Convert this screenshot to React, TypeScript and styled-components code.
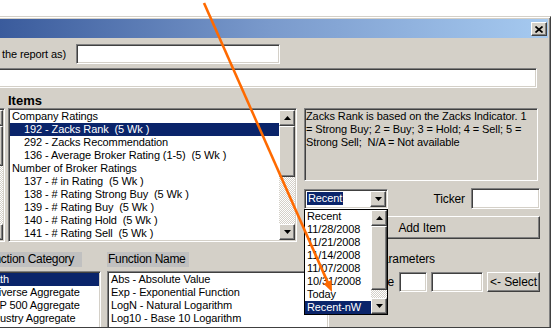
import React from 'react';
import styled, { createGlobalStyle, css } from 'styled-components';

const FACE = '#d4d0c8';
const SHADOW = '#808080';
const DARK = '#404040';
const NAVY = '#0a246a';
const CHECKER = `repeating-conic-gradient(#ffffff 0% 25%, ${FACE} 0% 50%) 0 0 / 2px 2px`;

const GlobalStyle = createGlobalStyle`
  html, body { margin: 0; padding: 0; background: #ffffff; }
  body {
    font-family: "Liberation Sans", Arial, sans-serif;
    font-size: 11px;
    letter-spacing: -0.1px;
    color: #000000;
  }
  * { box-sizing: border-box; }
`;

const sunken = css`
  border: 1px solid;
  border-color: ${SHADOW} #ffffff #ffffff ${SHADOW};
  padding: 1px;
  box-shadow: inset 1px 1px ${DARK}, inset -1px -1px ${FACE};
`;

const raised = css`
  border: 1px solid;
  border-color: #ffffff ${DARK} ${DARK} #ffffff;
  box-shadow: inset -1px -1px ${SHADOW};
  background: ${FACE};
`;

const Page = styled.div`
  position: relative;
  width: 551px;
  height: 328px;
  overflow: hidden;
  padding-top: 16px;
`;

const Window = styled.div`
  width: 651px;
  height: 312px;
  margin-left: -100px;
  overflow: hidden;
  background: ${FACE};
  border-top: 1px solid ${FACE};
  border-right: 1px solid ${DARK};
  border-bottom: 1px solid ${DARK};
  box-shadow: inset 0 1px #ffffff, inset -1px 0 ${SHADOW};
  padding: 2px 2px 0 0;
`;

const TitleBar = styled.div`
  height: 19px;
  display: flex;
  align-items: flex-start;
  justify-content: flex-end;
  padding: 3px 1px 0 0;
  background: linear-gradient(90deg, #1a3a80 0%, #3a5b9c 15.4%, #7a9acc 57%, #a6caf0 100%);
`;

const CloseButton = styled.div`
  ${raised}
  width: 16px;
  height: 14px;
  display: flex;
  align-items: center;
  justify-content: center;
`;

const Body = styled.div`
  padding-top: 6px;
`;

const FieldRow = styled.div`
  display: flex;
  align-items: center;
  gap: 10px;
  height: 20px;
`;

const FieldLabel = styled.div`
  width: 166px;
  text-align: right;
  white-space: nowrap;
`;

const TextBox = styled.div<{ $w: number; $h?: number }>`
  ${sunken}
  width: ${(p) => p.$w}px;
  height: ${(p) => p.$h ?? 20}px;
  background: #ffffff;
  flex: none;
`;

const WideRow = styled.div`
  margin-top: 4px;
`;

const TopSection = styled.div`
  display: flex;
  align-items: flex-start;
  margin-top: 4px;
`;

const Pane = styled.div<{ $w: number; $ml?: number }>`
  width: ${(p) => p.$w}px;
  margin-left: ${(p) => p.$ml ?? 0}px;
  flex: none;
  display: flex;
  flex-direction: column;
`;

const SectionLabel = styled.div`
  height: 16px;
  line-height: 17px;
  font-size: 13px;
  font-weight: bold;
  letter-spacing: 0;
`;

const ListBox = styled.div<{ $h: number }>`
  ${sunken}
  height: ${(p) => p.$h}px;
  background: #ffffff;
  display: flex;
  overflow: hidden;
`;

const ListRows = styled.div`
  flex: 1;
  min-width: 0;
  display: flex;
  flex-direction: column;
`;

const Row = styled.div<{ $indent: number; $selected?: boolean }>`
  height: 13px;
  line-height: 13px;
  flex: none;
  white-space: pre;
  padding-left: ${(p) => p.$indent}px;
  background: ${(p) => (p.$selected ? NAVY : 'transparent')};
  color: ${(p) => (p.$selected ? '#ffffff' : '#000000')};
`;

const SBar = styled.div`
  width: 16px;
  flex: none;
  display: flex;
  flex-direction: column;
  background: ${CHECKER};
`;

const SBtn = styled.div`
  ${raised}
  height: 16px;
  flex: none;
  display: flex;
  align-items: center;
  justify-content: center;
`;

const Thumb = styled.div<{ $top: number; $h: number }>`
  ${raised}
  margin-top: ${(p) => p.$top}px;
  height: ${(p) => p.$h}px;
  flex: none;
`;

const Spacer = styled.div`
  flex: 1;
`;

const RightPane = styled.div`
  width: 236px;
  margin-left: 7px;
  padding-top: 16px;
  flex: none;
  display: flex;
  flex-direction: column;
`;

const Description = styled.div`
  ${sunken}
  width: 234px;
  height: 73px;
  background: ${FACE};
  line-height: 13px;
  white-space: pre;
  padding-left: 1px;
`;

const ComboRow = styled.div`
  margin-top: 7px;
  display: flex;
  align-items: center;
  height: 21px;
`;

const ComboWrap = styled.div`
  position: relative;
  flex: none;
`;

const Combo = styled.div`
  ${sunken}
  width: 84px;
  height: 20px;
  background: #ffffff;
  display: flex;
  align-items: center;
  justify-content: space-between;
`;

const ComboText = styled.span`
  margin-left: 1px;
  height: 13px;
  line-height: 13px;
  padding: 0 1px;
  background: ${NAVY};
  color: #ffffff;
`;

const ComboButton = styled(SBtn)`
  width: 16px;
  height: 16px;
`;

const Popup = styled.div`
  position: absolute;
  left: 0;
  top: 20px;
  width: 84px;
  height: 106px;
  border: 1px solid #000000;
  background: #ffffff;
  display: flex;
  z-index: 5;
`;

const TickerLabel = styled.div`
  margin-left: auto;
  margin-right: 6px;
  font-size: 12px;
`;

const Button = styled.div<{ $w: number; $h: number }>`
  ${raised}
  width: ${(p) => p.$w}px;
  height: ${(p) => p.$h}px;
  display: flex;
  align-items: center;
  justify-content: center;
  flex: none;
  font-size: 12px;
`;

const AddItemRow = styled.div`
  margin-top: 7px;
`;

const BottomSection = styled.div`
  display: flex;
  align-items: flex-start;
  margin-top: 10px;
`;

const Caption = styled.div<{ $w: number }>`
  width: ${(p) => p.$w}px;
  height: 15px;
  line-height: 15px;
  background: #c0c0c0;
  padding-left: 1px;
  white-space: nowrap;
  font-size: 12px;
  letter-spacing: -0.3px;
`;

const ListGap = styled.div`
  height: 4px;
`;

const ParamsPane = styled.div`
  width: 211px;
  flex: none;
  display: flex;
  flex-direction: column;
`;

const ParamsLabel = styled.div`
  height: 15px;
  line-height: 15px;
  padding-left: 45px;
  font-size: 12px;
`;

const ParamRow = styled.div`
  margin-top: 5px;
  display: flex;
  align-items: center;
  justify-content: flex-end;
  gap: 4px;
`;

const ParamLabel = styled.div`
  margin-right: 1px;
  font-size: 12px;
`;

const Overlay = styled.svg`
  position: absolute;
  left: 0;
  top: 0;
  pointer-events: none;
  z-index: 10;
`;

const Arrow = ({ up }: { up?: boolean }) => (
  <svg width="7" height="4" viewBox="0 0 7 4">
    <path d={up ? 'M3.5 0 L7 4 L0 4 Z' : 'M0 0 L7 0 L3.5 4 Z'} fill="#000" />
  </svg>
);

const Scrollbar = ({ top, h }: { top: number; h: number }) => (
  <SBar>
    <SBtn>
      <Arrow up />
    </SBtn>
    <Thumb $top={top} $h={h} />
    <Spacer />
    <SBtn>
      <Arrow />
    </SBtn>
  </SBar>
);

type Item = { text: string; indent: number; selected?: boolean };

const items: Item[] = [
  { text: 'Company Ratings', indent: 2 },
  { text: '192 - Zacks Rank  (5 Wk )', indent: 14, selected: true },
  { text: '292 - Zacks Recommendation', indent: 14 },
  { text: '136 - Average Broker Rating (1-5)  (5 Wk )', indent: 14 },
  { text: 'Number of Broker Ratings', indent: 2 },
  { text: '137 - # in Rating  (5 Wk )', indent: 14 },
  { text: '138 - # Rating Strong Buy  (5 Wk )', indent: 14 },
  { text: '139 - # Rating Buy  (5 Wk )', indent: 14 },
  { text: '140 - # Rating Hold  (5 Wk )', indent: 14 },
  { text: '141 - # Rating Sell  (5 Wk )', indent: 14 },
];

const dates = ['Recent', '11/28/2008', '11/21/2008', '11/14/2008', '11/07/2008', '10/31/2008', 'Today', 'Recent-nW'];

const categories = ['Math', 'Universe Aggregate', 'S&P 500 Aggregate', 'Industry Aggregate'];
const functions = [
  'Abs - Absolute Value',
  'Exp - Exponential Function',
  'LogN - Natural Logarithm',
  'Log10 - Base 10 Logarithm',
];

const description =
  'Zacks Rank is based on the Zacks Indicator. 1\n= Strong Buy; 2 = Buy; 3 = Hold; 4 = Sell; 5 =\nStrong Sell;  N/A = Not available';

export default function App() {
  const sx = 204, sy = 3, tx = 332, ty = 292;
  const dx = tx - sx, dy = ty - sy;
  const len = Math.hypot(dx, dy);
  const ux = dx / len, uy = dy / len;
  const px = -uy, py = ux;
  const bx = tx - ux * 11, by = ty - uy * 11;
  const head = `${tx},${ty} ${bx + px * 4.5},${by + py * 4.5} ${bx - px * 4.5},${by - py * 4.5}`;

  return (
    <>
      <GlobalStyle />
      <Page>
        <Window>
          <TitleBar>
            <CloseButton>
              <svg width="8" height="7" viewBox="0 0 8 7">
                <path d="M0.5 0.5 L7.5 6.5 M7.5 0.5 L0.5 6.5" stroke="#000" strokeWidth="1.7" />
              </svg>
            </CloseButton>
          </TitleBar>
          <Body>
            <FieldRow>
              <FieldLabel>Name (Save the report as)</FieldLabel>
              <TextBox $w={204} />
            </FieldRow>
            <WideRow>
              <TextBox $w={637} />
            </WideRow>
            <TopSection>
              <Pane $w={105}>
                <SectionLabel />
                <ListBox $h={134}>
                  <ListRows />
                  <Scrollbar top={0} h={40} />
                </ListBox>
              </Pane>
              <Pane $w={289} $ml={3}>
                <SectionLabel>Items</SectionLabel>
                <ListBox $h={134}>
                  <ListRows>
                    {items.map((it) => (
                      <Row key={it.text} $indent={it.indent} $selected={it.selected}>
                        {it.text}
                      </Row>
                    ))}
                  </ListRows>
                  <Scrollbar top={0} h={51} />
                </ListBox>
              </Pane>
              <RightPane>
                <Description>{description}</Description>
                <ComboRow>
                  <ComboWrap>
                    <Combo>
                      <ComboText>Recent</ComboText>
                      <ComboButton>
                        <Arrow />
                      </ComboButton>
                    </Combo>
                    <Popup>
                      <ListRows>
                        {dates.map((d) => (
                          <Row key={d} $indent={2} $selected={d === 'Recent-nW'}>
                            {d}
                          </Row>
                        ))}
                      </ListRows>
                      <Scrollbar top={0} h={64} />
                    </Popup>
                  </ComboWrap>
                  <TickerLabel>Ticker</TickerLabel>
                  <TextBox $w={69} $h={21} />
                </ComboRow>
                <AddItemRow>
                  <Button $w={236} $h={23}>Add Item</Button>
                </AddItemRow>
              </RightPane>
            </TopSection>
            <BottomSection>
              <Pane $w={121} $ml={80}>
                <Caption $w={102}>Function Category</Caption>
                <ListGap />
                <ListBox $h={80}>
                  <ListRows>
                    {categories.map((c, i) => (
                      <Row key={c} $indent={3} $selected={i === 0}>
                        {c}
                      </Row>
                    ))}
                  </ListRows>
                </ListBox>
              </Pane>
              <Pane $w={222} $ml={6}>
                <Caption $w={82}>Function Name</Caption>
                <ListGap />
                <ListBox $h={80}>
                  <ListRows>
                    {functions.map((f) => (
                      <Row key={f} $indent={2}>
                        {f}
                      </Row>
                    ))}
                  </ListRows>
                </ListBox>
              </Pane>
              <ParamsPane>
                <ParamsLabel>Parameters</ParamsLabel>
                <ParamRow>
                  <ParamLabel>Date</ParamLabel>
                  <TextBox $w={28} />
                  <TextBox $w={52} />
                  <Button $w={53} $h={20}>&lt;- Select</Button>
                </ParamRow>
              </ParamsPane>
            </BottomSection>
          </Body>
        </Window>
        <Overlay width={551} height={328} viewBox="0 0 551 328">
          <line x1={sx} y1={sy} x2={bx + ux * 1} y2={by + uy * 1} stroke="#ff6a00" strokeWidth={2.6} />
          <polygon points={head} fill="#ff6a00" />
        </Overlay>
      </Page>
    </>
  );
}
